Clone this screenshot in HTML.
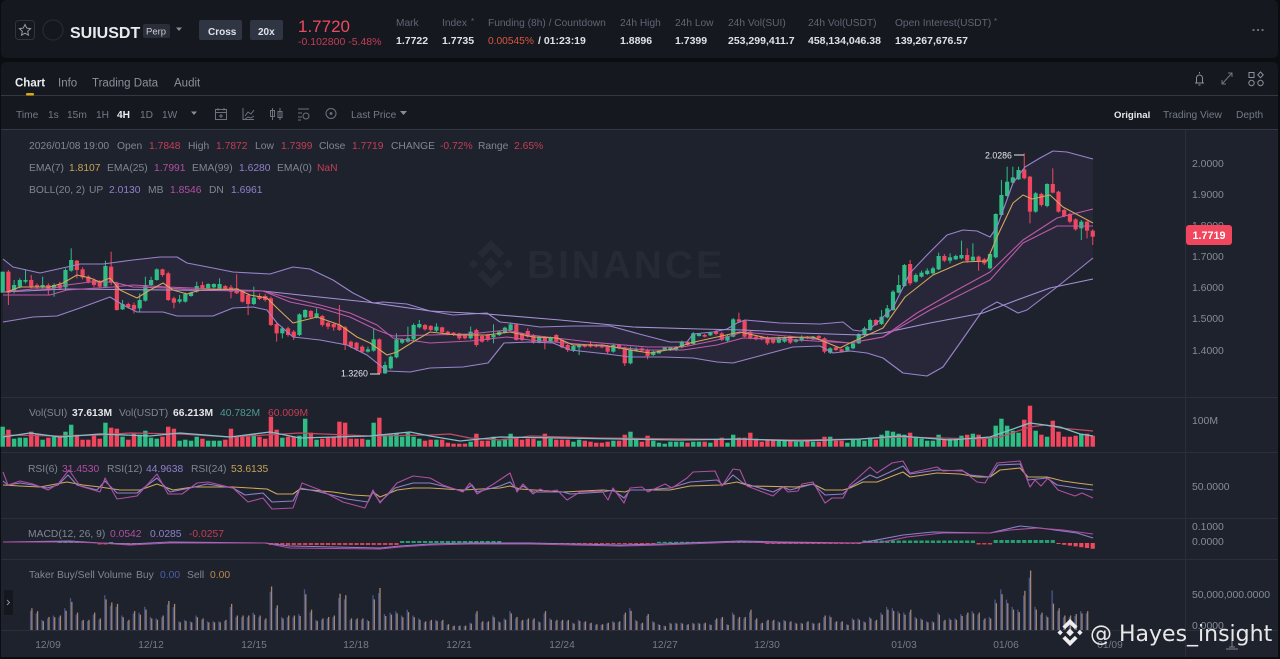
<!DOCTYPE html>
<html>
<head>
<meta charset="utf-8">
<style>
html,body{margin:0;padding:0;background:#0b0d11;width:1280px;height:659px;overflow:hidden}
svg{display:block}
text{font-family:"Liberation Sans",sans-serif;font-size:10.3px;fill:#7f8693}
.h{font-size:10.2px;fill:#5f6673}
.v{font-size:10.5px;fill:#dfe1e5;font-weight:bold}
.tab{font-size:11.5px;fill:#8a909c}
.t{font-size:10.2px;fill:#737a87}
.a{font-size:10.4px;fill:#858c98}
.d{font-size:10.2px;fill:#757c88;text-anchor:middle}
.r{fill:#c43e55}.g{fill:#c8a257}.p{fill:#b04fa2}.l{fill:#8f80cc}.w{fill:#e4e6ea;font-weight:bold}
#main{filter:blur(.35px)}
</style>
</head>
<body>
<svg xmlns="http://www.w3.org/2000/svg" width="1280" height="659" viewBox="0 0 1280 659">
<rect width="1280" height="659" fill="#0b0d11"/>
<g id="main">
<rect x="1" y="0" width="1277" height="58" rx="5" fill="#15181f"/>
<rect x="1" y="62" width="1277" height="595" rx="5" fill="#15181f"/>
<rect x="1" y="130" width="1277" height="527" fill="#1e222d"/>
<path d="M1 95.5H1278M1 129.5H1278" stroke="#333844" stroke-width="1"/>
<path d="M1 397.5H1278M1 452.5H1278M1 518.5H1278M1 559.5H1278M1 630.5H1278M1185.5 130V657" stroke="#2a2f3a" stroke-width="1"/>

<!-- Header -->
<rect x="15.5" y="20.5" width="19" height="19" rx="3" fill="none" stroke="#30343f"/>
<path d="M25 24.5l1.7 3.6 3.9.5-2.9 2.7.8 3.9-3.5-2-3.5 2 .8-3.9-2.9-2.7 3.9-.5z" fill="none" stroke="#969ba5" stroke-width="1"/>
<circle cx="53" cy="30" r="10" fill="#14171d" stroke="#2a2e38"/>
<text x="70" y="38" style="font-size:16px;font-weight:bold;fill:#e8eaed">SUIUSDT</text>
<rect x="143" y="24" width="27" height="14" rx="2" fill="#2a2e38"/>
<text x="146" y="34.5" style="font-size:9.5px;fill:#c9ccd2">Perp</text>
<path d="M176 27.5h6l-3 3.5z" fill="#848e9c"/>
<rect x="199" y="20" width="43" height="20" rx="2" fill="#2f3542"/>
<text x="208" y="35" style="font-size:10px;font-weight:bold;fill:#dfe2e7">Cross</text>
<rect x="250" y="20" width="33" height="20" rx="2" fill="#2f3542"/>
<text x="258" y="35" style="font-size:10px;font-weight:bold;fill:#dfe2e7">20x</text>
<text x="298" y="32" style="font-size:17px;fill:#ee4a60">1.7720</text>
<text x="298" y="45" style="font-size:10.5px;fill:#c43e55">-0.102800 -5.48%</text>
<text class="h" x="396" y="26">Mark</text><text class="v" x="396" y="44">1.7722</text>
<text class="h" x="442" y="26">Index</text><text class="h" x="471" y="24" style="font-size:8px">*</text><text class="v" x="442" y="44">1.7735</text>
<text class="h" x="488" y="26">Funding (8h) / Countdown</text>
<text x="488" y="44" style="font-size:10.2px;fill:#d9573f">0.00545%</text><text class="v" x="538" y="44">/ 01:23:19</text>
<text class="h" x="620" y="26">24h High</text><text class="v" x="620" y="44">1.8896</text>
<text class="h" x="675" y="26">24h Low</text><text class="v" x="675" y="44">1.7399</text>
<text class="h" x="728" y="26">24h Vol(SUI)</text><text class="v" x="728" y="44">253,299,411.7</text>
<text class="h" x="808" y="26">24h Vol(USDT)</text><text class="v" x="808" y="44">458,134,046.38</text>
<text class="h" x="895" y="26">Open Interest(USDT)</text><text class="h" x="994" y="24" style="font-size:8px">*</text><text class="v" x="895" y="44">139,267,676.57</text>
<path d="M1252.5 30h2M1257 30h2M1261.5 30h2" stroke="#848e9c" stroke-width="1.6"/>

<!-- Tabs -->
<text class="tab" x="15" y="86.5" style="fill:#eaecef;font-weight:bold">Chart</text>
<text class="tab" x="58" y="86.5">Info</text>
<text class="tab" x="92" y="86.5">Trading Data</text>
<text class="tab" x="174" y="86.5">Audit</text>
<rect x="26" y="93" width="8" height="2.5" rx="1" fill="#d9a80f"/>
<path d="M1195 83h9M1196.5 83v-5a3 3 0 0 1 6 0v5M1198.5 85h2M1199.5 72v1.5" fill="none" stroke="#8a909c" stroke-width="1"/>
<path d="M1222.5 83.5l9-10M1228 73h4v4M1222 80v4h4" fill="none" stroke="#70767f" stroke-width="1"/>
<g fill="none" stroke="#8a909c" stroke-width="1"><rect x="1249" y="72.5" width="5" height="5"/><path d="M1260.5 72l2.7 2.9-2.7 2.9-2.7-2.9z"/><circle cx="1251.5" cy="83" r="2.7"/><circle cx="1260.5" cy="83" r="2.7"/></g>

<!-- Toolbar -->
<text class="t" x="16" y="118">Time</text>
<text class="t" x="48" y="118">1s</text>
<text class="t" x="67" y="118">15m</text>
<text class="t" x="96" y="118">1H</text>
<text class="t" x="117" y="118" style="fill:#eaecef;font-weight:bold">4H</text>
<text class="t" x="140" y="118">1D</text>
<text class="t" x="162" y="118">1W</text>
<path d="M191 111.5h6l-3 3.5z" fill="#848e9c"/>
<g fill="none" stroke="#6b7280" stroke-width="1">
<path d="M215.5 109.5h11v10h-11zM215.5 112.5h11M218 108v2.5M224 108v2.5M219 116h4M221 114v4"/>
<path d="M243 108v11.5h11M245 116l3-4 3 2 3-4M245 119l3-2 3 1 3-2"/>
<path d="M272.5 108v12M280 108v12M270.5 110.5h4v6h-4zM278 111.5h4v6h-4z"/>
<path d="M298 109h11M298 113h4M298 117h4M298 120h3"/><circle cx="306" cy="116" r="3"/>
<circle cx="331" cy="113.5" r="5"/>
</g>
<circle cx="331" cy="113.5" r="1.4" fill="#6b7280"/>
<text class="t" x="351" y="118">Last Price</text>
<path d="M400 111h7l-3.5 4z" fill="#848e9c"/>
<text x="1114" y="118" style="font-size:9.6px;font-weight:bold;fill:#e6e8eb">Original</text>
<text class="t" x="1163" y="118">Trading View</text>
<text class="t" x="1236" y="118">Depth</text>

<!-- Binance watermark in chart -->
<g transform="translate(491,264) scale(1.5)" fill="#262a34"><path d="M0-16 8.9-7.1 5.7-3.9 0-9.6-5.7-3.9-8.9-7.1ZM0 16 8.9 7.1 5.7 3.9 0 9.6-5.7 3.9-8.9 7.1ZM0-4.5 4.5 0 0 4.5-4.5 0ZM-11.6-3.2-8.4 0-11.6 3.2-14.8 0ZM11.6-3.2 14.8 0 11.6 3.2 8.4 0Z"/></g>
<text x="527" y="278" textLength="195" style="font-size:39px;font-weight:bold;fill:#262a34">BINANCE</text>

<g id="chart"></g>

<!-- Legends -->
<text x="29" y="149">2026/01/08 19:00</text><text x="117" y="149">Open</text><text class="r" x="149" y="149">1.7848</text><text x="188" y="149">High</text><text class="r" x="216" y="149">1.7872</text><text x="255" y="149">Low</text><text class="r" x="281" y="149">1.7399</text><text x="319" y="149">Close</text><text class="r" x="352" y="149">1.7719</text><text x="391" y="149">CHANGE</text><text class="r" x="440" y="149">-0.72%</text><text x="478" y="149">Range</text><text class="r" x="514" y="149">2.65%</text>
<text x="29" y="171">EMA(7)</text><text class="g" x="69" y="171">1.8107</text><text x="107" y="171">EMA(25)</text><text class="p" x="154" y="171">1.7991</text><text x="192" y="171">EMA(99)</text><text class="l" x="239" y="171">1.6280</text><text x="277" y="171">EMA(0)</text><text class="r" x="317" y="171">NaN</text>
<text x="29" y="193">BOLL(20, 2)</text><text x="89" y="193">UP</text><text class="l" x="109" y="193">2.0130</text><text x="148" y="193">MB</text><text class="p" x="170" y="193">1.8546</text><text x="209" y="193">DN</text><text class="l" x="231" y="193">1.6961</text>
<text x="29" y="416">Vol(SUI)</text><text class="w" x="72" y="416">37.613M</text><text x="119" y="416">Vol(USDT)</text><text class="w" x="173" y="416">66.213M</text><text x="220" y="416" style="fill:#4f9a92">40.782M</text><text class="r" x="268" y="416">60.009M</text>
<text x="28" y="472">RSI(6)</text><text class="p" x="62" y="472">31.4530</text><text x="107" y="472">RSI(12)</text><text class="l" x="146" y="472">44.9638</text><text x="191" y="472">RSI(24)</text><text class="g" x="231" y="472">53.6135</text>
<text x="28" y="537">MACD(12, 26, 9)</text><text class="p" x="110" y="537">0.0542</text><text class="l" x="150" y="537">0.0285</text><text class="r" x="189" y="537">-0.0257</text>
<text x="29" y="578">Taker Buy/Sell Volume</text><text x="136" y="578">Buy</text><text x="160" y="578" style="fill:#4b5fa8">0.00</text><text x="187" y="578">Sell</text><text x="210" y="578" style="fill:#b88a4d">0.00</text>

<text x="985" y="158.5" style="font-size:8.8px;fill:#e6e8eb">2.0286</text>
<path d="M1014 155H1024" stroke="#e6e8eb"/>
<text x="341" y="376.5" style="font-size:8.8px;fill:#e6e8eb">1.3260</text>
<path d="M370 374H380" stroke="#e6e8eb"/>

<!-- Price axis -->
<text class="a" x="1192" y="167">2.0000</text>
<text class="a" x="1192" y="198">1.9000</text>
<text class="a" x="1192" y="229">1.8000</text>
<text class="a" x="1192" y="260">1.7000</text>
<text class="a" x="1192" y="291">1.6000</text>
<text class="a" x="1192" y="322">1.5000</text>
<text class="a" x="1192" y="354">1.4000</text>
<rect x="1186" y="225" width="46" height="20" rx="3" fill="#f0465e"/>
<text x="1209" y="239" text-anchor="middle" style="font-size:10.8px;font-weight:bold;fill:#fff">1.7719</text>
<text class="a" x="1192" y="424">100M</text>
<text class="a" x="1192" y="490">50.0000</text>
<text class="a" x="1192" y="530">0.1000</text>
<text class="a" x="1192" y="545">0.0000</text>
<text class="a" x="1192" y="598">50,000,000.0000</text>
<text class="a" x="1192" y="629">0.0000</text>

<!-- Date axis -->
<text class="d" x="48" y="648">12/09</text><text class="d" x="151" y="648">12/12</text><text class="d" x="254" y="648">12/15</text><text class="d" x="356" y="648">12/18</text><text class="d" x="459" y="648">12/21</text><text class="d" x="562" y="648">12/24</text><text class="d" x="665" y="648">12/27</text><text class="d" x="767" y="648">12/30</text><text class="d" x="904" y="648">01/03</text><text class="d" x="1006" y="648">01/06</text><text class="d" x="1110" y="648">01/09</text>

<rect x="4" y="590" width="9" height="25" rx="1" fill="#14171d"/>
<path d="M7 600l2.5 2.5L7 605" fill="none" stroke="#848e9c"/>
<path d="M1232 640v7M1226 649h12M1229 647h6" fill="none" stroke="#7f8693"/>
</g>

<!-- Overlay watermark -->
<g transform="translate(1070,632.5) scale(.85)" fill="#eeeeee"><path d="M0-16 8.9-7.1 5.7-3.9 0-9.6-5.7-3.9-8.9-7.1ZM0 16 8.9 7.1 5.7 3.9 0 9.6-5.7 3.9-8.9 7.1ZM0-4.5 4.5 0 0 4.5-4.5 0ZM-11.6-3.2-8.4 0-11.6 3.2-14.8 0ZM11.6-3.2 14.8 0 11.6 3.2 8.4 0Z"/></g>
<text x="1090" y="641" style="font-family:'DejaVu Sans',sans-serif;font-size:22px;fill:#e8e8e8">@ Hayes_insight</text>
</svg>

<script>
var NS="http://www.w3.org/2000/svg",root=document.getElementById("chart");
function el(n,a){var e=document.createElementNS(NS,n);for(var k in a)e.setAttribute(k,a[k]);root.appendChild(e);return e}
function X(i){return 2.7+5.707*i}
function P(a){var s=[];for(var i=0;i<a.length;i+=2)s.push(a[i]+","+a[i+1]);return s.join(" ")}
function line(a,c,w,o){el("polyline",{points:P(a),fill:"none",stroke:c,"stroke-width":w||1,"stroke-linejoin":"round","stroke-opacity":o||1})}
var G="#2ebd85",R="#f0465e";

var U=[3,259,13,267,40,273,67,267,80,264,103,264,133,260,160,257,177,257,187,263,213,268,233,272,270,274,293,267,310,269,333,280,353,293,373,303,383,302,407,304,430,311,453,315,487,313,500,322,510,323,540,327,573,326,610,326,643,335,670,342,687,342,693,334,713,332,727,329,737,323,745,320,780,323,820,324,843,322,853,330,860,331,870,329,893,308,910,273,927,255,947,235,963,230,977,231,990,237,997,227,1013,183,1025,167,1040,158,1053,151,1067,152,1093,159];
var L=[3,322,33,317,57,316,80,308,110,297,123,305,137,312,163,312,177,316,213,316,233,308,253,307,267,310,277,323,293,337,320,340,347,345,367,355,387,371,410,372,430,368,463,367,488,363,504,343,530,342,553,343,570,350,607,354,630,357,663,357,693,358,717,362,733,363,763,355,793,347,820,346,833,353,850,351,867,353,883,358,903,373,927,376,943,367,960,343,983,310,997,302,1007,307,1018,313,1027,310,1057,287,1093,258];
var rev=[];for(var i=L.length-2;i>=0;i-=2)rev.push(L[i],L[i+1]);
el("polygon",{points:P(U.concat(rev)),fill:"#272739"});

// candles: [green?,top,bot,wickTop,wickBot]
var A=[[1,125,188],[0,125,188,120,225],[1,165,185,150,190],[1,150,170,145,175],[1,150,155,118,160],[0,150,170,135,175],[0,165,172,160,178],[1,165,170,140,175],[0,165,178,160,195],[1,165,175,160,200],[0,163,175,155,180],[1,120,172,115,180],[1,90,122,55,125],[0,92,120,90,145],[0,118,142,112,148],[0,140,155,136,160],[0,150,165,145,172],[0,155,170,150,175],[1,108,170,92,172],[0,110,158,65,165],[0,160,240,155,242],[1,222,238,210,240],[0,222,232,218,236],[0,225,238,218,250],[1,210,235,190,245],[1,165,212,140,215],[1,150,165,140,168],[1,118,150,115,152],[0,118,135,116,140],[0,130,210,125,213],[0,205,218,200,235],[1,208,215,195,220],[1,192,215,188,218],[1,188,198,185,200],[1,168,185,155,188],[0,165,175,155,178],[1,162,175,160,178],[1,162,172,160,175],[1,162,178,145,180],[0,168,178,165,180],[0,172,185,165,205],[0,175,190,133,192],[0,183,215,180,218],[0,195,222,190,255],[1,203,222,170,225],[0,198,207,190,210],[0,198,210,192,215],[0,205,285,200,288],[0,282,310,278,335],[1,295,310,290,325],[0,295,315,290,320],[0,305,320,300,330],[1,253,315,250,318],[1,240,262,238,265],[0,243,262,240,266],[1,250,262,235,265],[0,258,285,255,290],[0,278,290,275,298],[0,282,292,280,302],[0,285,300,225,303],[0,292,345,288,360],[0,335,350,332,355],[0,338,358,336,362],[0,350,365,346,370],[1,358,365,350,368],[1,328,362,295,365],[0,328,430,325,432],[1,405,430,395,432],[1,380,415,376,418],[1,328,382,310,385],[1,328,338,325,342],[1,325,335,290,338],[1,285,328,280,332],[1,282,292,270,295],[0,285,298,282,302],[0,288,300,285,303]];
var B=[[1,290,302,280,306],[0,292,307,290,310],[0,305,312,302,316],[0,308,315,306,318],[0,310,325,308,330],[0,317,325,314,328],[1,305,325,290,328],[0,300,345,296,350],[0,318,335,315,338],[0,315,330,312,335],[1,315,322,283,340],[1,305,315,302,318],[1,293,308,290,310],[1,283,300,280,303],[0,283,330,280,332],[0,310,330,308,333],[0,303,320,295,323],[0,315,338,312,341],[1,320,338,318,340],[0,320,335,318,358],[1,322,335,320,338],[0,315,335,312,338],[0,330,352,328,355],[0,345,360,342,366],[1,348,360,345,366],[1,347,352,343,375],[0,345,350,342,353],[0,342,350,333,353],[0,345,350,342,353],[0,345,352,343,355],[0,348,365,345,372],[1,345,365,340,368],[0,345,355,342,358],[0,352,400,350,408],[1,358,400,350,403],[1,358,362,352,365],[0,355,362,352,365],[0,360,378,356,388],[1,365,375,362,378],[1,362,370,360,372],[1,352,360,350,363],[1,352,360,350,363],[1,350,360,348,363],[1,335,350,332,355],[0,335,345,332,348],[1,310,342,306,345],[1,312,318,310,320],[0,315,320,312,322],[1,308,316,305,318],[0,305,312,300,316],[0,310,330,306,333],[1,318,332,314,335],[1,268,320,264,322],[0,268,275,248,278],[0,272,320,270,322],[0,305,325,303,328],[0,320,328,317,331],[0,320,328,317,331],[0,322,340,319,345],[0,325,338,322,342],[1,322,338,320,340],[1,322,335,320,338],[0,318,338,316,342],[1,328,335,326,338],[1,320,332,316,335],[0,320,325,318,328],[1,320,328,318,330],[0,318,325,315,328],[0,325,365,322,370],[1,355,368,352,372],[0,352,360,350,363],[0,358,365,356,368],[1,350,362,348,365],[1,340,355,338,358],[1,312,340,310,342]];
var Cc=[[1,565,585,560,588],[1,540,570,536,573],[0,540,555,537,558],[1,530,552,510,555],[1,505,532,495,535],[1,455,510,450,512],[1,435,458,405,460],[1,375,438,372,440],[0,372,430,360,436],[1,405,425,400,428],[1,398,410,392,413],[1,392,402,385,405],[1,385,400,380,403],[1,348,388,338,390],[0,348,362,342,366],[1,352,362,340,370],[1,348,358,344,360],[1,345,355,302,358],[0,345,362,325,368],[1,350,362,310,365],[0,350,365,347,392],[0,358,370,354,375],[1,342,385,338,388],[1,222,352,220,355],[1,165,225,120,228],[1,125,168,80,170],[1,112,128,80,130],[1,90,118,80,120],[0,88,115,40,118],[0,110,215,108,250],[1,160,215,156,218],[0,162,195,158,200],[1,132,198,130,202],[0,132,158,85,160],[0,155,215,152,218],[0,210,228,206,232],[0,222,245,218,250],[0,238,268,235,272],[1,245,265,240,300],[0,245,272,242,295],[0,272,290,268,315]];
var cand=[];
A.forEach(function(c){cand.push([c[0],230+c[1]/3,230+c[2]/3,230+(c[3]||c[1])/3,230+(c[4]||c[2])/3])});
B.forEach(function(c){cand.push([c[0],230+c[1]/3,230+c[2]/3,230+(c[3]||c[1])/3,230+(c[4]||c[2])/3])});
Cc.forEach(function(c){cand.push([c[0],140+c[1]/3,140+c[2]/3,140+(c[3]||c[1])/3,140+(c[4]||c[2])/3])});
cand.forEach(function(c,i){var x=X(i),col=c[0]?G:R;
 el("rect",{x:x-.5,y:c[3],width:1,height:c[4]-c[3],fill:col});
 el("rect",{x:x-2.1,y:c[1],width:4.2,height:Math.max(c[2]-c[1],1),fill:col});
});

// Moving averages / bands
line(U,"#9a83cc",1.1);line(L,"#9a83cc",1.1);
line([3,292,67,289,167,290,263,291,300,295,367,302,430,311,487,314,560,320,633,327,700,329,743,330,800,333,860,335,883,333,930,323,983,313,1017,300,1050,288,1093,279],"#a592d6",1.1);
line([3,292,33,289,50,289,67,285,90,282,113,282,133,287,167,288,200,290,263,291,290,302,320,308,350,317,377,330,393,336,430,335,470,334,507,330,530,335,590,342,647,347,683,347,717,340,743,332,797,337,850,343,883,337,917,313,957,290,990,272,1023,240,1057,218,1093,209],"#bd5aa8",1.1);
line([3,295,50,295,67,290,113,287,133,285,167,287,263,291,290,298,320,305,350,313,377,325,393,338,430,343,470,341,507,337,530,340,590,345,647,350,683,350,717,345,743,338,797,340,850,343,883,337,930,310,990,280,1023,243,1057,226,1093,226],"#bd5aa8",1.1);
line([7,292,20,287,50,287,63,283,77,275,90,278,100,282,110,278,120,290,137,298,150,290,163,283,173,290,187,294,200,290,237,289,250,295,267,298,277,308,293,323,317,317,340,325,357,337,370,343,387,355,397,352,413,342,430,332,457,335,487,335,510,332,533,337,557,338,573,345,603,345,630,350,650,353,673,349,690,343,717,337,740,332,767,338,813,337,840,348,850,343,883,328,905,297,933,275,963,262,987,261,997,237,1013,203,1023,195,1032,199,1050,195,1063,207,1093,223],"#d2a75b",1.1);

// Volume
var V=[20,17,8,9,9,15,13,7,9,10,10,15,22,12,7,7,12,8,24,19,18,10,7,13,12,16,9,8,10,20,18,6,7,6,10,8,6,6,6,7,18,10,10,10,12,10,8,30,17,9,10,10,11,28,14,7,8,9,10,25,24,8,8,8,7,24,29,11,12,13,10,14,10,8,6,7,7,7,4,3,3,3,5,13,6,6,10,6,8,13,9,7,8,8,6,13,8,7,7,7,5,7,6,5,4,4,5,6,6,12,15,7,5,11,6,4,3,5,5,5,4,5,5,5,4,8,9,4,12,9,9,14,8,5,7,7,6,7,6,5,5,6,5,5,10,10,6,6,4,8,8,6,9,7,12,16,15,13,12,14,9,8,6,6,12,7,8,8,11,12,13,12,8,9,21,28,21,16,14,27,41,16,12,10,26,15,10,10,11,13,13,11];
V.forEach(function(h,i){var x=X(i),c=cand[i]&&cand[i][0];
 el("rect",{x:x-2.2,y:446.7-h,width:4.4,height:h,fill:c?G:R});
 if(i<5||i>190)return;
 var t=h*1.45,bt=t*(c?1:.88),ot=t*(c?.88:1);
 if(i==184){bt=t*1.05;ot=t*.7}
 el("rect",{x:x-1.3,y:630-bt,width:1.3,height:bt,fill:"#46578f"});
 el("rect",{x:x,y:630-ot,width:1.3,height:ot,fill:"#a58670"});
});
line([3,435,60,436,100,435,130,433,180,434,230,437,300,433,370,436,430,435,450,434,470,438,500,440,530,436,600,438,700,439,800,440,860,439,900,437,980,439,1000,437,1030,427,1045,425,1060,428,1093,431],"#c24a62",1.2);
line([3,437,30,433,60,437,100,434,150,436,180,433,230,437,270,432,300,438,370,436,410,432,430,436,460,441,500,437,560,438,620,439,680,440,740,439,800,441,860,439,900,436,950,440,990,437,1030,423,1045,425,1060,427,1080,434,1093,436],"#7ec0c8",1.3);

// RSI
line([3,485,20,486,40,487,67,482,83,485,100,487,120,490,140,490,157,484,173,490,193,487,233,487,267,489,277,494,293,494,300,489,333,492,353,495,370,496,373,492,380,497,397,490,413,488,430,488,463,490,500,488,510,486,520,489,563,492,603,490,625,492,630,490,670,490,690,486,720,485,737,482,750,486,797,487,813,484,825,490,843,490,850,488,863,482,877,482,903,472,910,477,937,473,960,474,977,477,990,477,1000,470,1020,468,1028,477,1047,477,1063,481,1077,483,1093,485],"#d2a75b",1.1);
line([3,481,8,485,20,483,33,485,47,488,58,485,68,475,77,485,97,490,105,481,117,493,137,493,157,478,170,492,190,488,207,484,233,488,245,495,263,493,272,502,293,501,300,488,320,492,347,499,368,502,373,492,380,502,395,488,413,483,430,483,463,491,472,485,477,492,500,486,510,482,517,490,523,486,533,492,563,492,570,494,603,492,613,490,624,498,630,490,643,490,670,488,690,482,717,480,723,485,733,475,743,483,773,492,783,487,790,490,813,484,825,495,843,494,850,487,870,475,877,478,903,466,910,474,937,470,963,471,970,475,990,477,998,465,1020,464,1028,480,1047,478,1057,485,1077,488,1093,490],"#8f80cc",1.1);
line([3,472,8,485,20,481,33,484,48,490,58,484,69,470,80,486,100,492,105,478,117,499,137,496,157,474,168,494,182,494,197,483,208,482,233,488,248,502,263,498,272,509,293,508,302,483,320,490,343,502,365,508,373,490,380,503,397,483,413,476,430,478,443,485,463,492,470,483,477,494,492,485,510,473,517,492,523,484,533,494,540,489,547,492,557,490,567,500,580,492,602,491,608,500,613,488,624,503,630,488,642,487,648,492,665,484,672,488,687,478,693,472,715,471,722,486,733,469,740,470,747,486,773,496,783,487,788,492,798,491,802,484,813,482,825,503,832,498,843,498,850,485,870,467,877,473,892,463,903,461,910,473,937,467,943,471,962,470,977,482,985,483,997,463,1020,461,1030,487,1035,480,1041,486,1048,478,1058,490,1075,496,1082,493,1093,498],"#b04fa2",1.1);

// MACD
var MH=[[10,16,1,1],[17,18,0,1.5],[19,19,1,1],[20,25,0,1.5],[47,69,0,2],[70,87,1,2],[92,114,0,1],[115,133,1,1.2],[134,150,0,1],[151,170,1,2.5],[171,173,0,1.5],[174,184,1,3]];
MH.forEach(function(r){for(var i=r[0];i<=r[1];i++){var x=X(i);
 el("rect",{x:x-2.1,y:r[2]?543-r[3]:543,width:4.2,height:r[3],fill:r[2]?"#259e70":"#d63f55"})}});
for(var i=185;i<=191;i++){var h=1+(i-185)*.8;el("rect",{x:X(i)-2.1,y:543,width:4.2,height:h,fill:"#f0465e"})}
line([3,542,70,541,100,543,130,544,170,542,265,543,290,546,380,548,400,546,430,544,470,543,530,543,620,545,660,544,740,541,780,542,860,543,903,535,933,532,990,533,1020,526,1040,528,1077,533,1093,538],"#8f80cc",1.1);
line([3,542,70,542,100,543,130,545,170,543,265,543,290,548,380,549,400,547,430,545,470,544,530,544,620,546,660,545,740,542,780,543,850,543,883,542,907,537,943,533,990,533,1010,530,1037,528,1063,530,1093,534],"#b04fa2",1.1);
</script>
</body>
</html>
